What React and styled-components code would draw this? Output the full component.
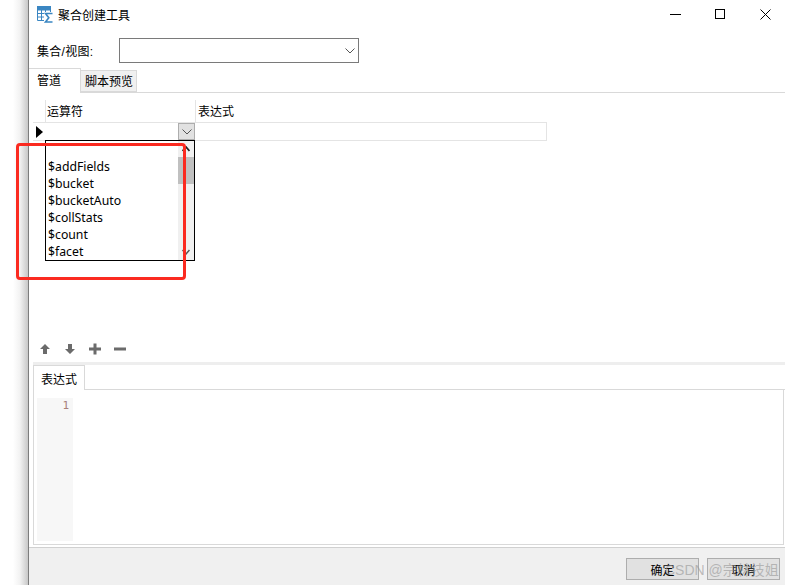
import React from "react";
import styled, { createGlobalStyle } from "styled-components";

const operators = ["$addFields", "$bucket", "$bucketAuto", "$collStats", "$count", "$facet"];

const GlobalStyle = createGlobalStyle`
  html, body {
    margin: 0;
    padding: 0;
    height: 100%;
    overflow: hidden;
    background: #fff;
  }
  body {
    font-family: "Liberation Sans", "Noto Sans CJK SC", sans-serif;
    font-size: 12px;
    color: #000;
  }
`;

const Page = styled.div`
  position: relative;
  display: flex;
  width: 785px;
  height: 585px;
  overflow: hidden;
`;

const Desktop = styled.div`
  width: 28px;
  flex: none;
  background: linear-gradient(to right, #fff 0, #fff 13px, #f2f2f2 20px, #c8c8c8 28px);
`;

const Window = styled.div`
  flex: 1;
  min-width: 0;
  display: flex;
  flex-direction: column;
  border-left: 1px solid #7d7d7d;
  background: #fff;
`;

const TitleBar = styled.div`
  height: 29px;
  flex: none;
  display: flex;
  align-items: center;
  padding-left: 8px;
  gap: 5px;
`;

const TitleText = styled.span`
  font-size: 12px;
`;

const WinButtons = styled.div`
  margin-left: auto;
  margin-right: -3px;
  display: flex;
`;

const WinButton = styled.div`
  width: 45px;
  height: 29px;
  display: flex;
  align-items: center;
  justify-content: center;
`;

const FieldRow = styled.div`
  height: 25px;
  margin-top: 9px;
  flex: none;
  display: flex;
  align-items: center;
  padding-left: 8px;
`;

const FieldLabel = styled.label`
  width: 82px;
  flex: none;
  letter-spacing: 0.3px;
`;

const Combo = styled.div`
  width: 240px;
  height: 25px;
  box-sizing: border-box;
  border: 1px solid #7a7a7a;
  display: flex;
  align-items: center;
  justify-content: flex-end;
  padding-right: 3px;
`;

const TabStrip = styled.div`
  height: 25px;
  margin-top: 4px;
  flex: none;
  display: flex;
  align-items: flex-end;
  border-bottom: 1px solid #d9d9d9;
`;

const Tab = styled.div`
  box-sizing: border-box;
  width: ${(p) => p.$width}px;
  height: ${(p) => (p.$active ? 25 : 22)}px;
  margin-bottom: ${(p) => (p.$active ? -1 : 0)}px;
  padding: ${(p) => (p.$active ? "0 0 4px 8px" : "0 0 2px 4px")};
  display: flex;
  align-items: center;
  background: ${(p) => (p.$active ? "#fff" : "#f0f0f0")};
  border: 1px solid #d9d9d9;
  border-left: none;
  border-bottom: ${(p) => (p.$active ? "none" : "1px solid #d9d9d9")};
`;

const GridArea = styled.div`
  flex: 1;
  min-height: 0;
  padding: 7px 0 0 4px;
`;

const GridHead = styled.div`
  display: flex;
  height: 22px;
  width: 514px;
  border-bottom: 1px solid #e4e4e4;
`;

const GridRow = styled.div`
  display: flex;
  height: 17px;
  width: 514px;
  border-bottom: 1px solid #e4e4e4;
`;

const Indicator = styled.div`
  width: 12px;
  flex: none;
  display: flex;
  align-items: center;
  justify-content: center;
`;

const HeadCell = styled.div`
  box-sizing: border-box;
  width: ${(p) => p.$width}px;
  border-left: 1px solid #e4e4e4;
  padding: 0 0 2px ${(p) => p.$pad}px;
  display: flex;
  align-items: center;
`;

const EditCell = styled.div`
  box-sizing: border-box;
  width: ${(p) => p.$width}px;
  display: flex;
  justify-content: flex-end;
  border-right: ${(p) => (p.$last ? "1px solid #e4e4e4" : "none")};
`;

const DropButton = styled.div`
  width: 17px;
  height: 17px;
  box-sizing: border-box;
  background: #e1e1e1;
  border: 1px solid #adadad;
  display: flex;
  align-items: center;
  justify-content: center;
`;

const MoveBar = styled.div`
  height: 20px;
  flex: none;
  display: flex;
  align-items: center;
  gap: 9px;
  padding-left: 8px;
`;

const Splitter = styled.div`
  height: 3px;
  margin: 3px 0 0 4px;
  flex: none;
  background: #eeeeee;
`;

const LowerTabs = styled.div`
  height: 24px;
  margin-left: 4px;
  flex: none;
  display: flex;
  align-items: flex-end;
  border-bottom: 1px solid #d9d9d9;
`;

const LowerTab = styled.div`
  box-sizing: border-box;
  width: 52px;
  height: 25px;
  margin-bottom: -1px;
  background: #fff;
  border: 1px solid #d9d9d9;
  border-bottom: none;
  display: flex;
  align-items: center;
  justify-content: center;
`;

const EditorPanel = styled.div`
  box-sizing: border-box;
  height: 155px;
  flex: none;
  margin: 0 1px 0 4px;
  padding: 8px 0 3px 3px;
  border-left: 1px solid #d9d9d9;
  border-right: 1px solid #d9d9d9;
  border-bottom: 1px solid #d9d9d9;
  display: flex;
`;

const Gutter = styled.div`
  width: 36px;
  background: #f7f7f7;
  box-sizing: border-box;
  padding: 1px 4px 0 0;
  text-align: right;
  color: #a8807a;
  font-family: "DejaVu Sans Mono", monospace;
  font-size: 11px;
  line-height: 14px;
`;

const Footer = styled.div`
  margin-top: 2px;
  height: 38px;
  flex: none;
  box-sizing: border-box;
  background: #f0f0f0;
  border-top: 1px solid #d0d0d0;
  display: flex;
  justify-content: flex-end;
  gap: 8px;
  padding: 10px 5px 0 0;
`;

const FooterButton = styled.button`
  width: 73px;
  height: 22px;
  box-sizing: border-box;
  padding: 0;
  background: #e1e1e1;
  border: 1px solid #adadad;
  font: inherit;
  color: #000;
`;

const Watermark = styled.div`
  position: absolute;
  left: 665px;
  top: 561px;
  font-size: 14px;
  line-height: 18px;
  color: rgba(150, 150, 150, 0.6);
  white-space: nowrap;
`;

const DropList = styled.div`
  position: absolute;
  left: 45px;
  top: 140px;
  width: 150px;
  height: 121px;
  box-sizing: border-box;
  background: #fff;
  border: 1px solid #000;
  display: flex;
`;

const ListItems = styled.div`
  flex: 1;
  padding: 17px 0 0 2px;
`;

const ListItem = styled.div`
  height: 17px;
  line-height: 17px;
  font-family: "Noto Sans", "Liberation Sans", sans-serif;
  font-size: 12.25px;
`;

const Scrollbar = styled.div`
  width: 16px;
  flex: none;
  background: #f0f0f0;
  display: flex;
  flex-direction: column;
  align-items: center;
`;

const ScrollCap = styled.div`
  height: 16px;
  flex: none;
  display: flex;
  align-items: center;
  justify-content: center;
`;

const ScrollThumb = styled.div`
  width: 100%;
  height: 27px;
  background: #c0c0c0;
  flex: none;
`;

const ScrollGap = styled.div`
  flex: 1;
`;

const Annotation = styled.div`
  position: absolute;
  left: 16px;
  top: 143px;
  width: 170px;
  height: 137px;
  box-sizing: border-box;
  border: 3px solid #fb2a20;
  border-radius: 4px;
`;

const AppIcon = () => (
  <svg width="16" height="17" viewBox="0 0 16 17">
    <rect x="0" y="0" width="14" height="4.500" fill="#3a86c2" />
    <path d="M0.500 4V14.500H7M13.500 4V6M0.500 7.500H7M0.500 11H7M4.500 4V14.500M8.500 4V6" fill="none" stroke="#3a86c2" />
    <path d="M15.500 7.500H8.500L11.800 11.800L8.500 16H15.500" fill="none" stroke="#3a86c2" strokeWidth="1.600" />
  </svg>
);

const Chevron = ({ color = "#555", width = 10 }) => (
  <svg width={width} height="6" viewBox="0 0 10 6">
    <path d="M0.5 0.5L5 5L9.5 0.5" fill="none" stroke={color} />
  </svg>
);

const Arrow = ({ up }) => (
  <svg width="16" height="16" viewBox="0 0 16 16">
    <path d={up ? "M8 3L13 8H10V13H6V8H3Z" : "M8 13L13 8H10V3H6V8H3Z"} fill="#6b6b6b" />
  </svg>
);

const Plus = () => (
  <svg width="16" height="16" viewBox="0 0 16 16">
    <path d="M6.500 2.500h3v4H14v3H9.500v4h-3v-4H2v-3h4.500z" fill="#6b6b6b" />
  </svg>
);

const Minus = () => (
  <svg width="16" height="16" viewBox="0 0 16 16">
    <rect x="2" y="6.500" width="12" height="3" fill="#6b6b6b" />
  </svg>
);

export default function App() {
  return (
    <>
      <GlobalStyle />
      <Page>
        <Desktop />
        <Window>
          <TitleBar>
            <AppIcon />
            <TitleText>聚合创建工具</TitleText>
            <WinButtons>
              <WinButton>
                <svg width="11" height="11" viewBox="0 0 11 11">
                  <path d="M0 5.500H11" stroke="#000" />
                </svg>
              </WinButton>
              <WinButton>
                <svg width="11" height="11" viewBox="0 0 11 11">
                  <rect x="0.500" y="0.500" width="9" height="9" fill="none" stroke="#000" />
                </svg>
              </WinButton>
              <WinButton>
                <svg width="11" height="11" viewBox="0 0 11 11">
                  <path d="M0.500 0.500L10.500 10.500M10.500 0.500L0.500 10.500" stroke="#000" />
                </svg>
              </WinButton>
            </WinButtons>
          </TitleBar>
          <FieldRow>
            <FieldLabel>集合/视图:</FieldLabel>
            <Combo>
              <Chevron />
            </Combo>
          </FieldRow>
          <TabStrip>
            <Tab $active $width={52}>管道</Tab>
            <Tab $width={56}>脚本预览</Tab>
          </TabStrip>
          <GridArea>
            <GridHead>
              <Indicator />
              <HeadCell $width={150} $pad={1}>运算符</HeadCell>
              <HeadCell $width={352} $pad={2}>表达式</HeadCell>
            </GridHead>
            <GridRow>
              <Indicator>
                <svg width="7" height="12" viewBox="0 0 7 12">
                  <path d="M0 0L7 6L0 12Z" fill="#000" />
                </svg>
              </Indicator>
              <EditCell $width={150}>
                <DropButton>
                  <Chevron />
                </DropButton>
              </EditCell>
              <EditCell $width={352} $last />
            </GridRow>
          </GridArea>
          <MoveBar>
            <Arrow up />
            <Arrow />
            <Plus />
            <Minus />
          </MoveBar>
          <Splitter />
          <LowerTabs>
            <LowerTab>表达式</LowerTab>
          </LowerTabs>
          <EditorPanel>
            <Gutter>1</Gutter>
          </EditorPanel>
          <Footer>
            <FooterButton>确定</FooterButton>
            <FooterButton>取消</FooterButton>
          </Footer>
        </Window>
        <DropList>
          <ListItems>
            {operators.map((op) => (
              <ListItem key={op}>{op}</ListItem>
            ))}
          </ListItems>
          <Scrollbar>
            <ScrollCap>
              <svg width="8" height="6" viewBox="0 0 8 6">
                <path d="M0.500 5L4 1L7.500 5" fill="none" stroke="#222" strokeWidth="1.800" />
              </svg>
            </ScrollCap>
            <ScrollThumb />
            <ScrollGap />
            <ScrollCap>
              <svg width="8" height="6" viewBox="0 0 8 6">
                <path d="M0.500 1L4 5L7.500 1" fill="none" stroke="#555" strokeWidth="1.500" />
              </svg>
            </ScrollCap>
          </Scrollbar>
        </DropList>
        <Annotation />
        <Watermark>CSDN @宗林技姐</Watermark>
      </Page>
    </>
  );
}
